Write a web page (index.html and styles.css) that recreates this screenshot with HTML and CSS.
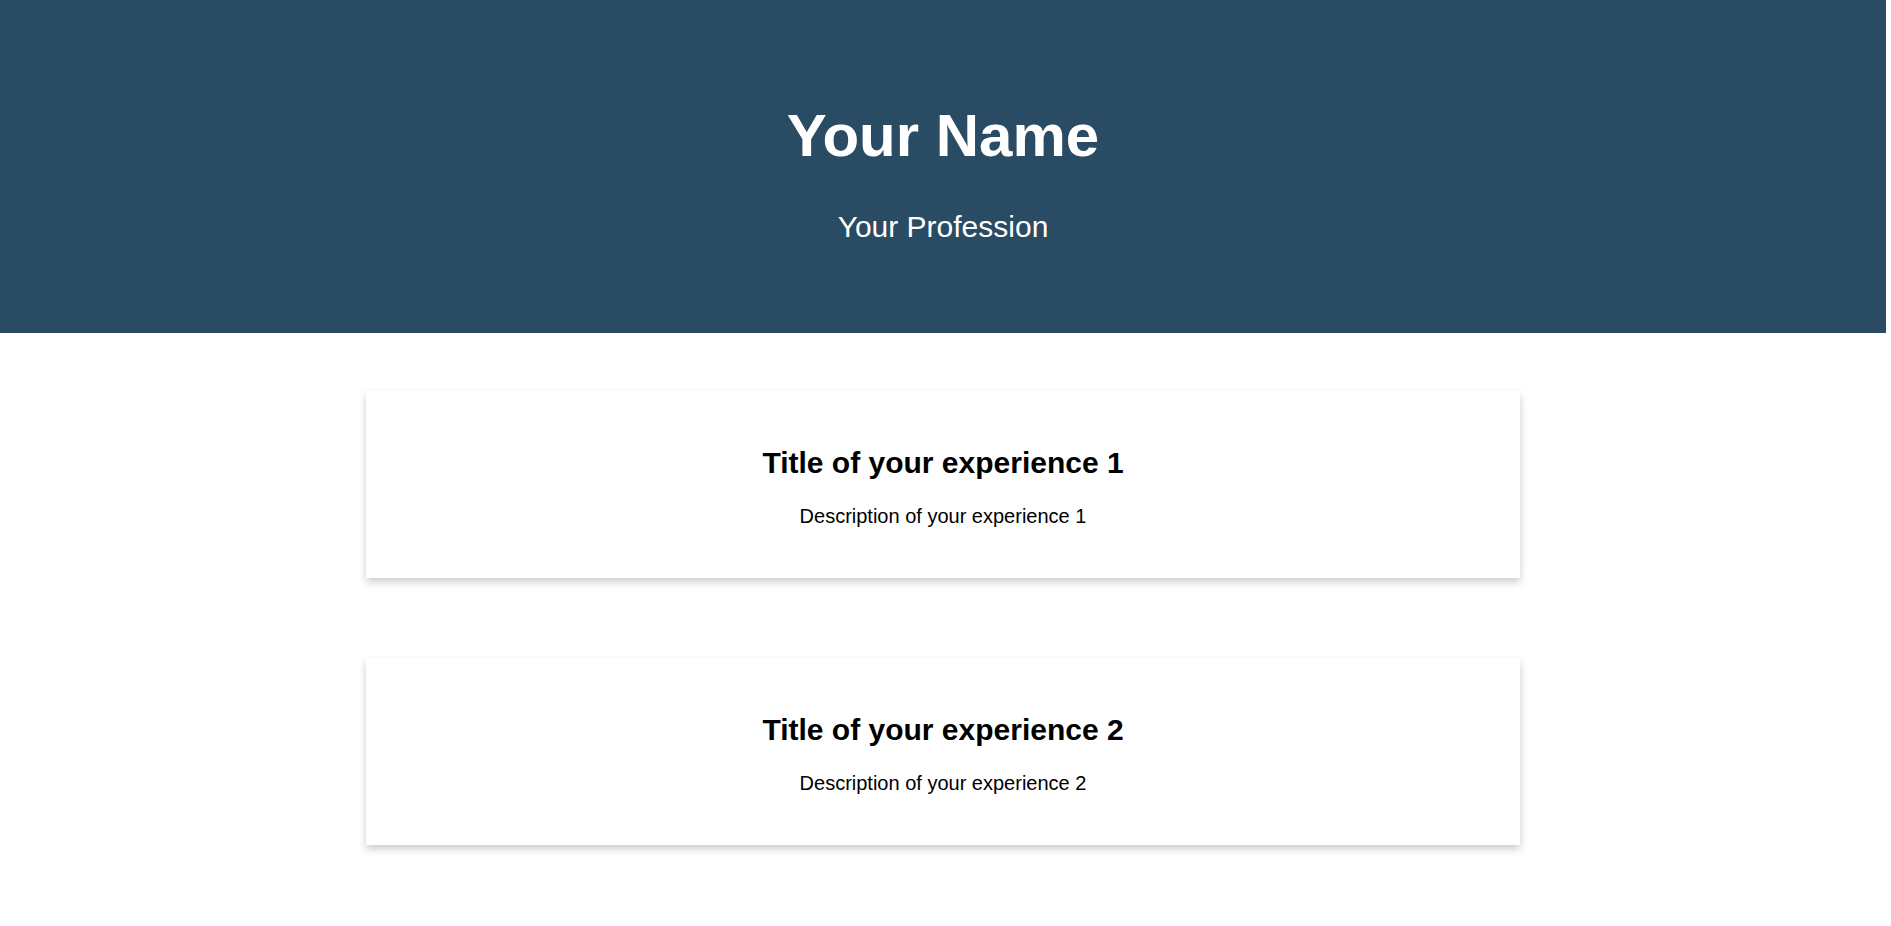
FILE: index.html
```html
<!DOCTYPE html>
<html lang="en">
<head>
<meta charset="utf-8">
<title>Your Name</title>
<link rel="stylesheet" href="styles.css">
</head>
<body>
<div class="page">
  <header class="hero">
    <h1 class="hero-name">Your Name</h1>
    <p class="hero-role">Your Profession</p>
  </header>
  <main class="experiences">
    <section class="card">
      <h2 class="card-title">Title of your experience 1</h2>
      <p class="card-text">Description of your experience 1</p>
    </section>
    <section class="card">
      <h2 class="card-title">Title of your experience 2</h2>
      <p class="card-text">Description of your experience 2</p>
    </section>
  </main>
</div>
</body>
</html>
```

FILE: styles.css
```css
html, body {
  margin: 0;
  padding: 0;
  background: #ffffff;
}

body {
  font-family: "Liberation Sans", Arial, sans-serif;
  color: #000000;
}

.page {
  width: calc(100% - 5px);
}

.hero {
  background: #2a4b64;
  color: #ffffff;
  text-align: center;
  padding: 60px 20px;
}

.hero-name {
  margin: 41px 0 0;
  font-size: 60px;
  font-weight: 700;
  line-height: 69px;
}

.hero-role {
  margin: 40px 0 29px;
  font-size: 30px;
  line-height: 34px;
}

.experiences {
  display: flex;
  flex-direction: column;
  align-items: center;
  gap: 80px;
  padding: 58px 0 80px;
}

.card {
  width: 1154px;
  box-sizing: border-box;
  background: #ffffff;
  box-shadow: 0 4px 8px rgba(0, 0, 0, 0.2);
  text-align: center;
  padding: 30px 20px;
}

.card-title {
  margin: 24px 0 0;
  font-size: 30px;
  font-weight: 700;
  line-height: 35px;
}

.card-text {
  margin: 25px 0 20px;
  font-size: 20px;
  line-height: 23px;
}
```
